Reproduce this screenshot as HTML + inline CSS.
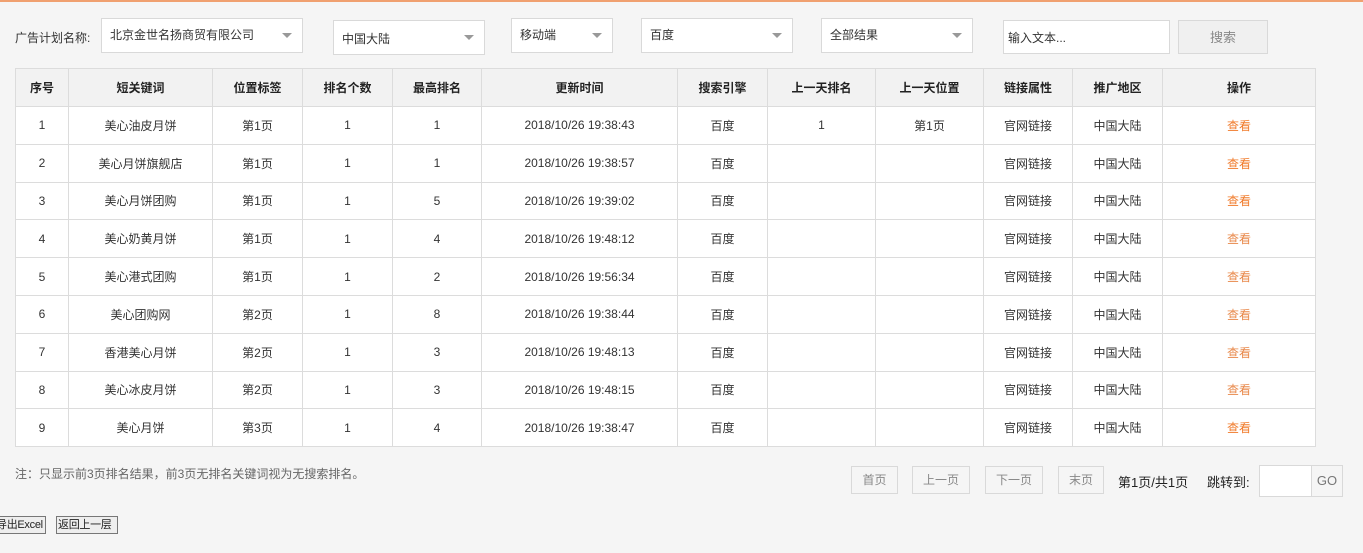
<!DOCTYPE html>
<html><head><meta charset="utf-8"><style>
*{margin:0;padding:0;box-sizing:border-box}
body{width:1363px;height:553px;background:#f5f5f5;font-family:"Liberation Sans","Noto Sans CJK SC",sans-serif;font-size:12px;color:#333;position:relative;overflow:hidden}
.top{position:absolute;left:0;top:0;width:1363px;height:2px;background:#f0a070}
.a{position:absolute}
.sel,.inp{position:absolute;background:#fff;border:1px solid #d9d9d9;height:35px;line-height:33px;padding-left:8px;font-size:12px;color:#333}
.sel:after{content:"";position:absolute;right:10px;top:14px;border-left:5px solid transparent;border-right:5px solid transparent;border-top:5px solid #999}
table{position:absolute;left:15px;top:68px;border-collapse:collapse;background:#fff}
td,th{border:1px solid #dcdcdc;text-align:center;height:37.8px;font-size:12px;color:#333;font-weight:normal;padding:0}
th{background:#f2f2f2;font-weight:bold;color:#222;height:38px}
.o{color:#f07a2a}.o2{color:#e8884a}
.pb{position:absolute;top:466px;height:28px;border:1px solid #d9d9d9;background:#f5f5f5;color:#888;text-align:center;line-height:26px;font-size:12px}
.bb{position:absolute;top:516px;height:18px;border:1px solid #777;background:#eee;line-height:16px;font-size:11px;color:#222;padding:0 1px;letter-spacing:-0.3px}
</style></head><body>
<div class="top"></div>
<div class="a" style="left:15px;top:29px;color:#333">广告计划名称:</div>
<div class="sel" style="left:101px;top:18px;width:202px">北京金世名扬商贸有限公司</div>
<div class="sel" style="left:333px;top:20px;width:152px;padding-top:2px">中国大陆</div>
<div class="sel" style="left:511px;top:18px;width:102px">移动端</div>
<div class="sel" style="left:641px;top:18px;width:152px">百度</div>
<div class="sel" style="left:821px;top:18px;width:152px">全部结果</div>
<div class="inp" style="left:1003px;top:20px;width:167px;height:34px;padding-left:4px;padding-top:1px">输入文本...</div>
<div class="a" style="left:1178px;top:20px;width:90px;height:34px;border:1px solid #d9d9d9;background:#f0f0f0;color:#888;text-align:center;line-height:34px;font-size:13px">搜索</div>
<table>
<colgroup><col style="width:53px"><col style="width:144px"><col style="width:90px"><col style="width:90px"><col style="width:89px"><col style="width:196px"><col style="width:90px"><col style="width:108px"><col style="width:108px"><col style="width:89px"><col style="width:90px"><col style="width:153px"></colgroup>
<tr><th>序号</th><th>短关键词</th><th>位置标签</th><th>排名个数</th><th>最高排名</th><th>更新时间</th><th>搜索引擎</th><th>上一天排名</th><th>上一天位置</th><th>链接属性</th><th>推广地区</th><th>操作</th></tr>
<tr><td>1</td><td>美心油皮月饼</td><td>第1页</td><td>1</td><td>1</td><td>2018/10/26 19:38:43</td><td>百度</td><td>1</td><td>第1页</td><td>官网链接</td><td>中国大陆</td><td class="o">查看</td></tr>
<tr><td>2</td><td>美心月饼旗舰店</td><td>第1页</td><td>1</td><td>1</td><td>2018/10/26 19:38:57</td><td>百度</td><td></td><td></td><td>官网链接</td><td>中国大陆</td><td class="o">查看</td></tr>
<tr><td>3</td><td>美心月饼团购</td><td>第1页</td><td>1</td><td>5</td><td>2018/10/26 19:39:02</td><td>百度</td><td></td><td></td><td>官网链接</td><td>中国大陆</td><td class="o">查看</td></tr>
<tr><td>4</td><td>美心奶黄月饼</td><td>第1页</td><td>1</td><td>4</td><td>2018/10/26 19:48:12</td><td>百度</td><td></td><td></td><td>官网链接</td><td>中国大陆</td><td class="o2">查看</td></tr>
<tr><td>5</td><td>美心港式团购</td><td>第1页</td><td>1</td><td>2</td><td>2018/10/26 19:56:34</td><td>百度</td><td></td><td></td><td>官网链接</td><td>中国大陆</td><td class="o2">查看</td></tr>
<tr><td>6</td><td>美心团购网</td><td>第2页</td><td>1</td><td>8</td><td>2018/10/26 19:38:44</td><td>百度</td><td></td><td></td><td>官网链接</td><td>中国大陆</td><td class="o2">查看</td></tr>
<tr><td>7</td><td>香港美心月饼</td><td>第2页</td><td>1</td><td>3</td><td>2018/10/26 19:48:13</td><td>百度</td><td></td><td></td><td>官网链接</td><td>中国大陆</td><td class="o2">查看</td></tr>
<tr><td>8</td><td>美心冰皮月饼</td><td>第2页</td><td>1</td><td>3</td><td>2018/10/26 19:48:15</td><td>百度</td><td></td><td></td><td>官网链接</td><td>中国大陆</td><td class="o2">查看</td></tr>
<tr><td>9</td><td>美心月饼</td><td>第3页</td><td>1</td><td>4</td><td>2018/10/26 19:38:47</td><td>百度</td><td></td><td></td><td>官网链接</td><td>中国大陆</td><td class="o">查看</td></tr>
</table>
<div class="a" style="left:15px;top:465px;color:#666">注：只显示前3页排名结果，前3页无排名关键词视为无搜索排名。</div>
<div class="pb" style="left:851px;width:47px">首页</div>
<div class="pb" style="left:912px;width:58px">上一页</div>
<div class="pb" style="left:985px;width:58px">下一页</div>
<div class="pb" style="left:1058px;width:46px">末页</div>
<div class="a" style="left:1118px;top:472px;font-size:13px;color:#222">第1页/共1页</div>
<div class="a" style="left:1207px;top:472px;font-size:13px;color:#222">跳转到:</div>
<div class="a" style="left:1259px;top:465px;width:84px;height:32px;border:1px solid #d9d9d9;background:#fff"></div>
<div class="a" style="left:1311px;top:465px;width:32px;height:32px;border:1px solid #d9d9d9;background:#f5f5f5;color:#777;text-align:center;line-height:30px;font-size:13px">GO</div>
<div class="bb" style="left:-6px;width:52px">导出Excel</div>
<div class="bb" style="left:56px;width:62px">返回上一层</div>
</body></html>
